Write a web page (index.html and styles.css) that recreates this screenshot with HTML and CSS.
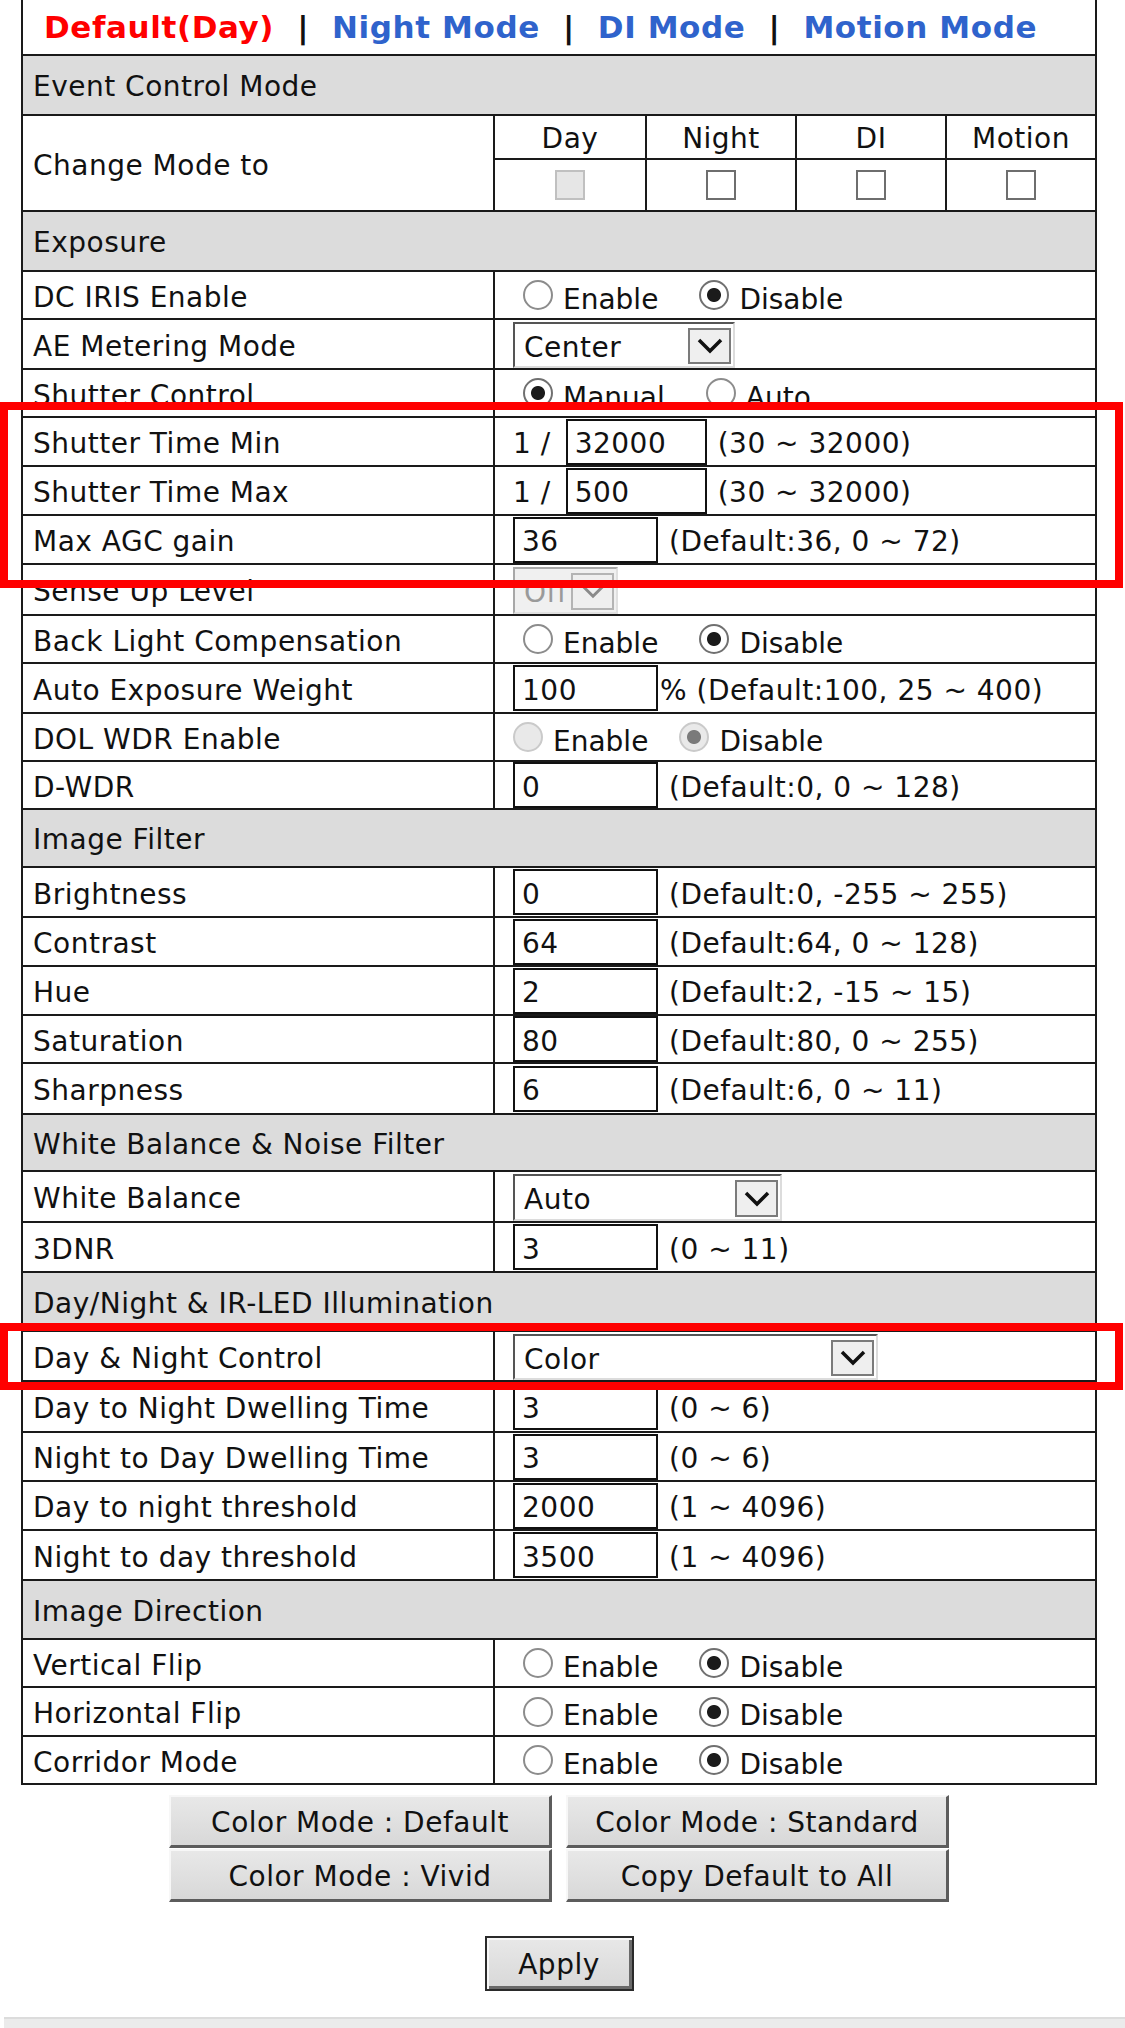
FILE: index.html
```html
<!DOCTYPE html>
<html lang="en">
<head>
<meta charset="utf-8">
<title>Image Setup</title>
<link rel="stylesheet" href="styles.css">
</head>
<body>
<div class="page">
  <div class="panel">
    <div class="tabs">
      <a class="tab tab-active">Default(Day)</a><span class="sep">|</span><a class="tab">Night Mode</a><span class="sep">|</span><a class="tab">DI Mode</a><span class="sep">|</span><a class="tab">Motion Mode</a>
    </div>

    <div class="sec sec-60">Event Control Mode</div>
    <div class="row row-mode">
      <div class="label">Change Mode to</div>
      <div class="mode-grid">
        <div class="mode-head">Day</div>
        <div class="mode-head">Night</div>
        <div class="mode-head">DI</div>
        <div class="mode-head">Motion</div>
        <div class="mode-cell"><input type="checkbox" class="chk" disabled></div>
        <div class="mode-cell"><input type="checkbox" class="chk"></div>
        <div class="mode-cell"><input type="checkbox" class="chk"></div>
        <div class="mode-cell"><input type="checkbox" class="chk"></div>
      </div>
    </div>

    <div class="sec sec-60">Exposure</div>
    <div class="row row-48">
      <div class="label">DC IRIS Enable</div>
      <div class="value">
        <label class="opt"><input type="radio" name="iris" class="rad"><span class="opt-text">Enable</span></label>
        <label class="opt"><input type="radio" name="iris" class="rad" checked><span class="opt-text">Disable</span></label>
      </div>
    </div>
    <div class="row row-50">
      <div class="label">AE Metering Mode</div>
      <div class="value">
        <div class="select sel-center"><span class="sel-val">Center</span><span class="sel-btn"><svg class="chev" viewBox="0 0 26 16" width="26" height="16"><path d="M2 2 L13 13 L24 2"/></svg></span></div>
      </div>
    </div>
    <div class="row row-48">
      <div class="label">Shutter Control</div>
      <div class="value">
        <label class="opt"><input type="radio" name="shutter" class="rad" checked><span class="opt-text">Manual</span></label>
        <label class="opt"><input type="radio" name="shutter" class="rad"><span class="opt-text">Auto</span></label>
      </div>
    </div>
    <div class="row">
      <div class="label">Shutter Time Min</div>
      <div class="value"><span class="pre">1 /</span><input type="text" class="num num-sm" value="32000"><span class="hint">(30 ~ 32000)</span></div>
    </div>
    <div class="row">
      <div class="label">Shutter Time Max</div>
      <div class="value"><span class="pre">1 /</span><input type="text" class="num num-sm" value="500"><span class="hint">(30 ~ 32000)</span></div>
    </div>
    <div class="row">
      <div class="label">Max AGC gain</div>
      <div class="value"><input type="text" class="num" value="36"><span class="hint">(Default:36, 0 ~ 72)</span></div>
    </div>
    <div class="row row-51">
      <div class="label">Sense Up Level</div>
      <div class="value">
        <div class="select sel-off is-disabled"><span class="sel-val">Off</span><span class="sel-btn"><svg class="chev" viewBox="0 0 26 16" width="22" height="14"><path d="M2 2 L13 13 L24 2"/></svg></span></div>
      </div>
    </div>
    <div class="row row-48">
      <div class="label">Back Light Compensation</div>
      <div class="value">
        <label class="opt"><input type="radio" name="blc" class="rad"><span class="opt-text">Enable</span></label>
        <label class="opt"><input type="radio" name="blc" class="rad" checked><span class="opt-text">Disable</span></label>
      </div>
    </div>
    <div class="row row-50">
      <div class="label">Auto Exposure Weight</div>
      <div class="value"><input type="text" class="num" value="100"><span class="hint hint-tight">% (Default:100, 25 ~ 400)</span></div>
    </div>
    <div class="row row-48">
      <div class="label">DOL WDR Enable</div>
      <div class="value value-flush">
        <label class="opt"><input type="radio" name="dol" class="rad" disabled><span class="opt-text">Enable</span></label>
        <label class="opt"><input type="radio" name="dol" class="rad" checked disabled><span class="opt-text">Disable</span></label>
      </div>
    </div>
    <div class="row row-48">
      <div class="label">D-WDR</div>
      <div class="value"><input type="text" class="num" value="0"><span class="hint">(Default:0, 0 ~ 128)</span></div>
    </div>

    <div class="sec">Image Filter</div>
    <div class="row row-50">
      <div class="label">Brightness</div>
      <div class="value"><input type="text" class="num" value="0"><span class="hint">(Default:0, -255 ~ 255)</span></div>
    </div>
    <div class="row">
      <div class="label">Contrast</div>
      <div class="value"><input type="text" class="num" value="64"><span class="hint">(Default:64, 0 ~ 128)</span></div>
    </div>
    <div class="row">
      <div class="label">Hue</div>
      <div class="value"><input type="text" class="num" value="2"><span class="hint">(Default:2, -15 ~ 15)</span></div>
    </div>
    <div class="row row-48">
      <div class="label">Saturation</div>
      <div class="value"><input type="text" class="num" value="80"><span class="hint">(Default:80, 0 ~ 255)</span></div>
    </div>
    <div class="row row-51">
      <div class="label">Sharpness</div>
      <div class="value"><input type="text" class="num" value="6"><span class="hint">(Default:6, 0 ~ 11)</span></div>
    </div>

    <div class="sec sec-57">White Balance &amp; Noise Filter</div>
    <div class="row row-51">
      <div class="label">White Balance</div>
      <div class="value">
        <div class="select sel-auto"><span class="sel-val">Auto</span><span class="sel-btn"><svg class="chev" viewBox="0 0 26 16" width="26" height="16"><path d="M2 2 L13 13 L24 2"/></svg></span></div>
      </div>
    </div>
    <div class="row row-50">
      <div class="label">3DNR</div>
      <div class="value"><input type="text" class="num" value="3"><span class="hint">(0 ~ 11)</span></div>
    </div>

    <div class="sec sec-59">Day/Night &amp; IR-LED Illumination</div>
    <div class="row row-50">
      <div class="label">Day &amp; Night Control</div>
      <div class="value">
        <div class="select sel-color"><span class="sel-val">Color</span><span class="sel-btn"><svg class="chev" viewBox="0 0 26 16" width="26" height="16"><path d="M2 2 L13 13 L24 2"/></svg></span></div>
      </div>
    </div>
    <div class="row row-51">
      <div class="label">Day to Night Dwelling Time</div>
      <div class="value"><input type="text" class="num" value="3"><span class="hint">(0 ~ 6)</span></div>
    </div>
    <div class="row">
      <div class="label">Night to Day Dwelling Time</div>
      <div class="value"><input type="text" class="num" value="3"><span class="hint">(0 ~ 6)</span></div>
    </div>
    <div class="row">
      <div class="label">Day to night threshold</div>
      <div class="value"><input type="text" class="num" value="2000"><span class="hint">(1 ~ 4096)</span></div>
    </div>
    <div class="row row-50">
      <div class="label">Night to day threshold</div>
      <div class="value"><input type="text" class="num" value="3500"><span class="hint">(1 ~ 4096)</span></div>
    </div>

    <div class="sec sec-59">Image Direction</div>
    <div class="row row-48">
      <div class="label">Vertical Flip</div>
      <div class="value">
        <label class="opt"><input type="radio" name="vflip" class="rad"><span class="opt-text">Enable</span></label>
        <label class="opt"><input type="radio" name="vflip" class="rad" checked><span class="opt-text">Disable</span></label>
      </div>
    </div>
    <div class="row">
      <div class="label">Horizontal Flip</div>
      <div class="value">
        <label class="opt"><input type="radio" name="hflip" class="rad"><span class="opt-text">Enable</span></label>
        <label class="opt"><input type="radio" name="hflip" class="rad" checked><span class="opt-text">Disable</span></label>
      </div>
    </div>
    <div class="row row-48">
      <div class="label">Corridor Mode</div>
      <div class="value">
        <label class="opt"><input type="radio" name="corridor" class="rad"><span class="opt-text">Enable</span></label>
        <label class="opt"><input type="radio" name="corridor" class="rad" checked><span class="opt-text">Disable</span></label>
      </div>
    </div>
  </div>

  <div class="actions">
    <button class="btn">Color Mode : Default</button>
    <button class="btn">Color Mode : Standard</button>
    <button class="btn">Color Mode : Vivid</button>
    <button class="btn">Copy Default to All</button>
  </div>

  <div class="apply-row">
    <button class="btn btn-apply">Apply</button>
  </div>

  <div class="footer-bar"></div>

  <div class="mark mark-shutter"></div>
  <div class="mark mark-daynight"></div>
</div>
</body>
</html>
```

FILE: styles.css
```css
* {
  box-sizing: border-box;
}

html,
body {
  margin: 0;
  padding: 0;
  background: #ffffff;
}

body {
  font-family: "DejaVu Sans", Verdana, sans-serif;
  font-size: 28px;
  letter-spacing: 0.5px;
  color: #111111;
}

.page {
  position: relative;
  width: 1125px;
  height: 2028px;
  overflow: hidden;
}

.panel {
  margin-left: 21px;
  width: 1076px;
  border-left: 2px solid #1a1a1a;
  border-right: 2px solid #1a1a1a;
}

/* mode tabs */
.tabs {
  height: 56px;
  border-bottom: 2px solid #1a1a1a;
  display: flex;
  align-items: center;
  padding-left: 21px;
  font-weight: bold;
  font-size: 31px;
  letter-spacing: 0.6px;
  white-space: nowrap;
}

.tab {
  color: #2f63cc;
  text-decoration: none;
}

.tab-active {
  color: #ff0000;
}

.sep {
  color: #111111;
  margin: 0 23px;
}

/* section header rows */
.sec {
  height: 58px;
  background: #dcdcdc;
  border-bottom: 2px solid #1a1a1a;
  display: flex;
  align-items: center;
  padding: 3px 0 0 10px;
}

.sec-60 { height: 60px; }
.sec-57 { height: 57px; }
.sec-59 { height: 59px; }

/* data rows */
.row {
  display: flex;
  height: 49px;
  border-bottom: 2px solid #1a1a1a;
}

.row-48 { height: 48px; }
.row-50 { height: 50px; }
.row-51 { height: 51px; }
.row-mode { height: 96px; }

.label {
  width: 472px;
  flex: none;
  border-right: 2px solid #1a1a1a;
  display: flex;
  align-items: center;
  padding: 4px 0 0 10px;
  white-space: nowrap;
}

.value {
  flex: 1;
  min-width: 0;
  display: flex;
  align-items: center;
  padding-left: 18px;
  white-space: nowrap;
}

/* change mode grid */
.mode-grid {
  flex: 1;
  display: grid;
  grid-template-columns: repeat(4, 1fr);
  grid-template-rows: 44px 1fr;
}

.mode-head {
  border-bottom: 2px solid #1a1a1a;
  display: flex;
  align-items: center;
  justify-content: center;
  padding-top: 2px;
}

.mode-cell {
  display: flex;
  align-items: center;
  justify-content: center;
}

.mode-head:not(:nth-child(4n+1)),
.mode-cell:not(:nth-child(4n+1)) {
  border-left: 2px solid #1a1a1a;
}

.chk {
  appearance: none;
  -webkit-appearance: none;
  width: 30px;
  height: 30px;
  margin: 0;
  border: 2px solid #6e6e6e;
  background: #ffffff;
}

.chk:disabled {
  background: #e6e6e6;
  border-color: #c0c0c0;
}

/* radios */
.opt {
  display: flex;
  align-items: center;
  margin-right: 31px;
}

.opt-text {
  margin-left: 10px;
  padding-top: 8px;
  letter-spacing: 0;
}

.rad {
  appearance: none;
  -webkit-appearance: none;
  flex: none;
  width: 30px;
  height: 30px;
  margin: 0 0 0 10px;
  border-radius: 50%;
  border: 2px solid #8c8c8c;
  background: #ffffff;
}

.rad:checked {
  border-color: #707070;
  background: radial-gradient(circle, #1b1b1b 0 6.5px, #ffffff 7.5px);
}

.rad:disabled {
  border-color: #cacaca;
  background: #e9e9e9;
}

.rad:disabled:checked {
  background: radial-gradient(circle, #7a7a7a 0 6.5px, #e9e9e9 7.5px);
}

.value-flush .rad {
  margin-left: 0;
}

/* number inputs */
.num {
  width: 145px;
  height: 46px;
  margin: 0;
  padding: 4px 0 0 7px;
  border: 2px solid #111111;
  background: #ffffff;
  font: inherit;
  letter-spacing: inherit;
  color: #111111;
  outline: none;
}

.num-sm {
  width: 141px;
}

.pre {
  margin-right: 15px;
  padding-top: 4px;
}

.hint {
  margin-left: 11px;
  padding-top: 4px;
}

.hint-tight {
  margin-left: 2px;
}

/* selects */
.select {
  display: flex;
  align-self: stretch;
  margin-top: 2px;
  padding: 4px 2px 2px 0;
  background: #ffffff;
  border-style: solid;
  border-width: 2px;
  border-color: #555555 #dcdcdc #dcdcdc #555555;
}

.sel-val {
  flex: 1;
  display: flex;
  align-items: center;
  padding: 2px 0 0 9px;
}

.sel-btn {
  width: 43px;
  flex: none;
  background: #efefef;
  border: 2px solid #7b7b7b;
  display: flex;
  align-items: center;
  justify-content: center;
  color: #111111;
}

.chev path {
  fill: none;
  stroke: currentColor;
  stroke-width: 3.5;
}

.sel-off { width: 105px; }
.sel-center { width: 222px; }
.sel-auto { width: 269px; }
.sel-color { width: 365px; }

.select.is-disabled {
  background: #f0f0f0;
  border-color: #a8a8a8 #e0e0e0 #e0e0e0 #a8a8a8;
  color: #9a9a9a;
}

.is-disabled .sel-btn {
  border-color: #b4b4b4;
  color: #8a8a8a;
}

/* buttons */
.actions {
  margin: 10px 0 0 21px;
  width: 1076px;
  display: grid;
  grid-template-columns: 383px 383px;
  justify-content: center;
  column-gap: 14px;
  row-gap: 1px;
}

.btn {
  height: 53px;
  margin: 0;
  padding: 2px 0 0;
  font: inherit;
  letter-spacing: inherit;
  color: #111111;
  background: linear-gradient(#e8e8e8, #d8d8d8);
  border-style: solid;
  border-width: 2px 3px 3px 2px;
  border-color: #f7f7f7 #5c5c5c #5c5c5c #f7f7f7;
}

.apply-row {
  margin: 34px 0 0 21px;
  width: 1076px;
  display: flex;
  justify-content: center;
}

.btn-apply {
  width: 149px;
  height: 55px;
  border: 2px solid #2a2a2a;
  box-shadow: inset 2px 2px 0 #f7f7f7, inset -3px -3px 0 #6a6a6a;
}

.footer-bar {
  margin: 26px 0 0 4px;
  height: 20px;
  background: #ebebeb;
  border-top: 2px solid #dcdcdc;
}

/* red annotation frames */
.mark {
  position: absolute;
  left: 0;
  width: 1123px;
  border: 8px solid #ff0000;
}

.mark-shutter {
  top: 402px;
  height: 186px;
}

.mark-daynight {
  top: 1323px;
  height: 67px;
}
```
